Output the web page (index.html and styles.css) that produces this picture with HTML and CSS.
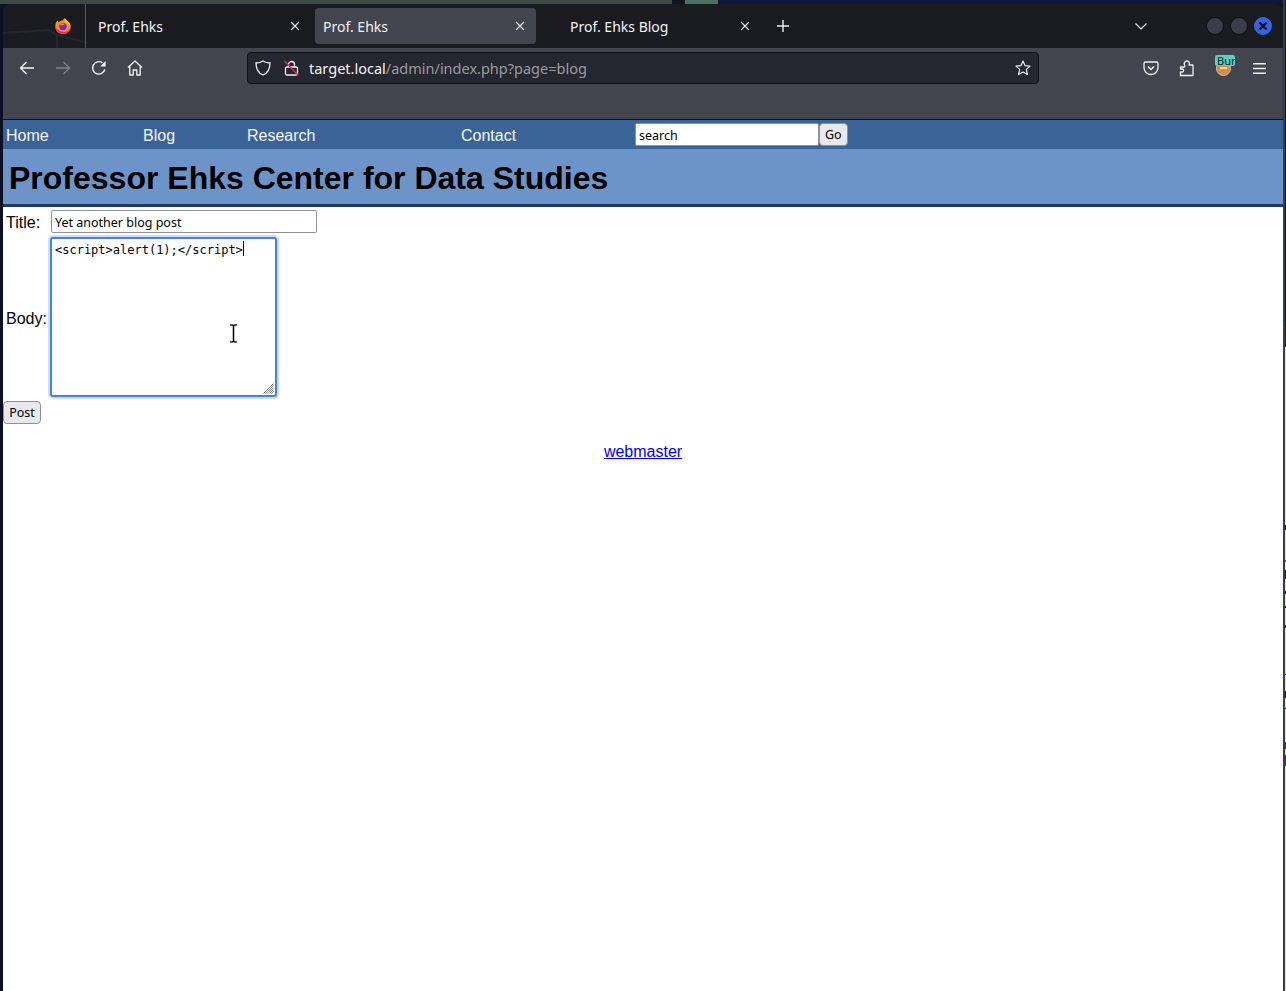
FILE: index.html
```html
<!DOCTYPE html>
<html lang="en">
<head>
<meta charset="utf-8">
<title>Prof. Ehks</title>
<link rel="stylesheet" href="styles.css">
</head>
<body>
<div class="wallpaper"><i class="wp a"></i><i class="wp b"></i><i class="wp c"></i><i class="wp d"></i><i class="wp e"></i></div>
<div class="window">
  <div class="tabbar">
    <svg class="tabart" width="85" height="44" viewBox="0 0 85 44"><path d="M0 29 L46 26 L54 31 L54 44 M54 31 L85 39" fill="none" stroke="#25262b" stroke-width="2"/></svg>
    <div class="logo-slot">
      <svg width="16" height="16" viewBox="0 0 16 16"><path d="M0.5 6 C1 4 2 3 3 2.6 C3 3.6 3.4 4 4 4.2 C5 2.8 6.8 2.6 8 2.6 C8.2 1.4 9 0.6 10 0 C10 1.6 11.5 2 13 3.4 C15 5 15.7 7 15.6 9 C15.4 13 12 16 8 16 C4 16 0.3 13 0.3 8.5 C0.3 7.6 0.3 6.8 0.5 6 Z" fill="#ff8a1f"/><path d="M10 0 C10 1.6 11.5 2 13 3.4 C15 5 15.7 7 15.6 9 C14.6 6.6 12.6 5 10.6 4.6 C9.6 3.4 9.4 1.4 10 0 Z" fill="#ffd02e"/><path d="M0.3 8.5 C0.3 13 4 16 8 16 C12 16 14.8 13.6 15.4 10.4 C13.4 13.4 10.4 14.2 7.6 13.8 C4.4 13.4 2 11.4 0.3 8.5 Z" fill="#ee2c62"/><circle cx="8" cy="8.6" r="3.7" fill="#6b2fd0"/><path d="M4.6 6.6 C6 5.2 8.4 5.2 9.8 6.2 L7.4 7.6 Z" fill="#ff8a1f"/></svg>
    </div>
    <div class="tab first"><span class="tab-title">Prof. Ehks</span><svg class="x" width="10" height="10" viewBox="0 0 10 10"><path d="M1 1 L9 9 M9 1 L1 9" stroke="#e6e6e8" stroke-width="1.1"/></svg></div>
    <div class="tab active"><span class="tab-title">Prof. Ehks</span><svg class="x" width="10" height="10" viewBox="0 0 10 10"><path d="M1 1 L9 9 M9 1 L1 9" stroke="#e6e6e8" stroke-width="1.1"/></svg></div>
    <div class="tab third"><span class="tab-title">Prof. Ehks Blog</span><svg class="x" width="10" height="10" viewBox="0 0 10 10"><path d="M1 1 L9 9 M9 1 L1 9" stroke="#e6e6e8" stroke-width="1.1"/></svg></div>
    <svg class="plus" width="12" height="12" viewBox="0 0 12 12"><path d="M6 0 V12 M0 6 H12" stroke="#f0f0f2" stroke-width="1.4"/></svg>
    <svg class="chev" width="12" height="7" viewBox="0 0 12 7"><path d="M0.5 0.5 L6 6 L11.5 0.5" fill="none" stroke="#e6e6e8" stroke-width="1.2"/></svg>
    <div class="winbtns"><span class="wb"></span><span class="wb"></span><span class="wb close"><svg width="10" height="10" viewBox="0 0 10 10"><path d="M1.5 1.5 L8.5 8.5 M8.5 1.5 L1.5 8.5" stroke="#07122e" stroke-width="2.4"/></svg></span></div>
  </div>
  <div class="toolbar">
    <div class="navrow">
      <div class="navbtns">
        <svg width="16" height="16" viewBox="0 0 16 16"><path d="M15 8 H1.5 M7.5 2 L1.5 8 L7.5 14" fill="none" stroke="#f2f2f4" stroke-width="1.3"/></svg>
        <svg width="16" height="16" viewBox="0 0 16 16"><path d="M1 8 H14.5 M8.5 2 L14.5 8 L8.5 14" fill="none" stroke="#7f8187" stroke-width="1.3"/></svg>
        <svg width="16" height="16" viewBox="0 0 16 16"><path d="M13.8 9.5 A6.2 6.2 0 1 1 11.5 2.9" fill="none" stroke="#f2f2f4" stroke-width="1.4"/><path d="M14.6 1 V6.4 H9.2 Z" fill="#f2f2f4"/></svg>
        <svg width="16" height="16" viewBox="0 0 16 16"><path d="M1 7.5 L8 1 L15 7.5 M2.8 6.5 V15 H6.2 V10 H9.8 V15 H13.2 V6.5" fill="none" stroke="#f2f2f4" stroke-width="1.3" stroke-linejoin="round"/></svg>
      </div>
      <div class="urlbar">
        <svg class="shield" width="16" height="16" viewBox="0 0 16 16"><path d="M8 1 C10 2.4 12.6 3 15 3 C15 9 13 13 8 15 C3 13 1 9 1 3 C3.4 3 6 2.4 8 1 Z" fill="none" stroke="#f0f0f2" stroke-width="1.3"/></svg>
        <svg class="lock" width="15" height="16" viewBox="0 0 15 16"><rect x="1.5" y="7" width="12" height="8" rx="1.5" fill="none" stroke="#f0f0f2" stroke-width="1.3"/><path d="M4.5 7 V4.5 A3 3 0 0 1 10.5 4.5 V7" fill="none" stroke="#f0f0f2" stroke-width="1.3"/><path d="M0.5 1 L14 15" stroke="#e22850" stroke-width="1.4"/></svg>
        <span class="url"><span class="host">target.local</span><span class="path">/admin/index.php?page=blog</span></span>
        <svg class="star" width="16" height="16" viewBox="0 0 16 16"><path d="M8 1 L10 5.6 L15 6.1 L11.3 9.4 L12.4 14.5 L8 11.9 L3.6 14.5 L4.7 9.4 L1 6.1 L6 5.6 Z" fill="none" stroke="#f0f0f2" stroke-width="1.2" stroke-linejoin="round"/></svg>
      </div>
      <div class="extras">
        <svg width="16" height="16" viewBox="0 0 16 16"><path d="M2.5 2 H13.5 A1.5 1.5 0 0 1 15 3.5 V7.5 A7 7 0 0 1 1 7.5 V3.5 A1.5 1.5 0 0 1 2.5 2 Z" fill="none" stroke="#f0f0f2" stroke-width="1.3"/><path d="M5 6.5 L8 9.5 L11 6.5" fill="none" stroke="#f0f0f2" stroke-width="1.5"/></svg>
        <svg width="16" height="17" viewBox="0 0 16 17"><path d="M1.5 7 H5 C6 7 6 5.5 5.5 5 C4.5 3.5 6 1 8 1 C10 1 11 3 10 5 H14 V15.5 H1.5 V12 H3.5 C5 12 5 9 3.5 9 H1.5 Z" fill="none" stroke="#f0f0f2" stroke-width="1.3" stroke-linejoin="round"/></svg>
        <div class="burp"><span class="burp-face"><i class="burp-inner"></i></span><span class="burp-tag">Bur</span></div>
        <svg class="menu" width="13" height="11" viewBox="0 0 13 11"><path d="M0 0.75 H13 M0 5.5 H13 M0 10.25 H13" stroke="#f0f0f2" stroke-width="1.3"/></svg>
      </div>
    </div>
  </div>
  <div class="page">
    <nav class="sitenav">
      <a class="n-home">Home</a><a class="n-blog">Blog</a><a class="n-research">Research</a><a class="n-contact">Contact</a>
      <form class="searchform"><input class="search" type="text" value="search"><button class="btn" type="button">Go</button></form>
    </nav>
    <header class="banner"><h1>Professor Ehks Center for Data Studies</h1></header>
    <form class="postform">
      <div class="field title-field"><label>Title:</label><input class="title" type="text" value="Yet another blog post"></div>
      <div class="field body-field"><label class="body-label">Body:</label>
        <div class="ta-wrap">
          <textarea class="body">&lt;script&gt;alert(1);&lt;/script&gt;</textarea>
          <span class="caret"></span>
          <svg class="grip" width="11" height="11" viewBox="0 0 11 11"><path d="M0.5 10.5 L10.5 0.5 M2.5 10.5 L10.5 2.5 M4.5 10.5 L10.5 4.5 M6.5 10.5 L10.5 6.5 M8.5 10.5 L10.5 8.5" stroke="#7c7c7c" stroke-width="0.9"/></svg>
          <svg class="ibeam" width="9" height="19" viewBox="0 0 9 19"><path d="M1 1 H3.5 L4.5 2 L5.5 1 H8 M4.5 2 V17 M1 18 H3.5 L4.5 17 L5.5 18 H8" fill="none" stroke="#bbb" stroke-width="2.6"/><path d="M1 1 H3.5 L4.5 2 L5.5 1 H8 M4.5 2 V17 M1 18 H3.5 L4.5 17 L5.5 18 H8" fill="none" stroke="#000" stroke-width="1.1"/></svg>
        </div>
      </div>
      <button class="btn post" type="button">Post</button>
    </form>
    <p class="foot"><a href="#">webmaster</a></p>
  </div>
</div>
<div class="edge"><i class="sp s1"></i><i class="sp s2"></i><i class="sp s3"></i><i class="sp s4"></i><i class="sp s5"></i><i class="sp s6"></i><i class="sp s7"></i><i class="sp s8"></i><i class="sp s9"></i><i class="sp s10"></i><i class="sp s11"></i></div>
</body>
</html>
```
FILE: styles.css
```css
* { box-sizing: border-box; }
html, body { margin: 0; height: 991px; overflow: hidden; }
body { background: #0d1024; position: relative; font-family: "Liberation Sans", Arial, sans-serif; }

.wallpaper { display: flex; height: 4px; position: absolute; left: 0; right: 0; top: 0; }
.wp { display: block; height: 4px; }
.wp.a { width: 672px; background: #3b4a44; }
.wp.b { width: 13px; background: #10131f; }
.wp.c { width: 33px; background: #4f6e60; }
.wp.d { width: 2px; background: #10131f; }
.wp.e { flex: 1; background: #12163a; }

.window { position: absolute; left: 3px; top: 4px; width: 1280px; height: 987px; display: flex; flex-direction: column; border-radius: 7px 7px 0 0; overflow: hidden; }

.tabbar { height: 44px; background: #1a1b20; display: flex; align-items: center; position: relative; flex: none; }
.tabart { position: absolute; left: 0; top: 0; }
.logo-slot { width: 83px; height: 44px; padding: 14px 0 0 52px; border-right: 1px solid #56585e; flex: none; position: relative; }
.logo-slot svg { display: block; }
.tab { height: 36px; width: 221px; display: flex; align-items: center; justify-content: space-between; padding: 0 11px 0 8px; border-radius: 4px; flex: none; color: #f3f3f5; font: 14px/20px "Noto Sans", sans-serif; }
.tab-title { padding-top: 2px; }
.tab.first { width: 226px; padding-left: 12px; padding-right: 12px; }
.tab.active { background: #42454d; margin-left: 3px; }
.tab.third { margin-left: 4px; width: 221px; padding-left: 30px; }
.x { display: block; flex: none; }
.plus { margin-left: 16px; flex: none; }
.chev { margin-left: 346px; flex: none; }
.winbtns { margin-left: auto; margin-right: 11px; display: flex; gap: 6px; align-items: center; }
.wb { width: 18px; height: 18px; border-radius: 50%; background: #3b3e48; border: 1px solid #0e0f12; display: flex; align-items: center; justify-content: center; }
.wb.close { background: #3464e0; border-color: #3464e0; }

.toolbar { height: 72px; background: #42454d; border-bottom: 1px solid #111; flex: none; }
.navrow { display: flex; align-items: center; height: 40px; }
.navbtns { display: flex; gap: 20px; padding-left: 16px; width: 244px; flex: none; }
.navbtns svg, .extras svg { display: block; flex: none; }
.urlbar { width: 792px; height: 32px; background: #252730; border: 1px solid #0f1013; border-radius: 4px; display: flex; align-items: center; padding-left: 7px; padding-right: 7px; color: #f5f5f7; font: 14.5px/20px "Noto Sans", sans-serif; flex: none; }
.shield { margin-right: 13px; flex: none; }
.lock { margin-right: 10px; flex: none; }
.host { color: #f5f5f7; }
.path { color: #9a9ba1; }
.star { margin-left: auto; }
.extras { display: flex; align-items: center; gap: 20px; padding-left: 104px; }
.burp { width: 20px; height: 24px; position: relative; flex: none; }
.burp-face { position: absolute; left: 1px; top: 5px; width: 15px; height: 15px; border-radius: 50%; background: #d98c45; border: 1px solid #c9c4b8; }
.burp-inner { position: absolute; left: 3px; top: 5px; width: 7px; height: 2px; background: #f6d9a8; display: block; }
.burp-tag { position: absolute; left: 0; top: -1px; width: 20px; height: 11px; background: #5ad2c2; border-radius: 2px; padding-left: 2px; color: #06201c; font: 11px/11px "Noto Sans", sans-serif; }
.menu { margin-left: -2px; }

.page { flex: 1; background: #fff; }
.sitenav { height: 29px; background: #3a6398; display: flex; align-items: center; position: relative; font-size: 16px; color: #fff; }
.sitenav a { display: block; flex: none; color: #f5f8fc; padding-top: 2px; }
.n-home { width: 140px; padding-left: 3px; }
.n-blog { width: 104px; }
.n-research { width: 214px; }
.n-contact { width: 174px; }
.searchform { display: flex; flex: none; }
.search { width: 184px; height: 23px; border: 1px solid #8f8f9d; border-radius: 2px; padding: 1px 3px 0; font: 12.5px "Noto Sans", sans-serif; color: #000; background: #fff; }
.btn { height: 23px; padding: 0 5px; border: 1px solid #8f8f9d; border-radius: 4px; background: #e9e9ed; font: 12.5px "Noto Sans", sans-serif; color: #000; }
.banner { height: 58px; background: #6c94c8; border-bottom: 3px solid #1b3a6b; padding: 9px 0 0 6px; }
.banner h1 { margin: 0; font-size: 32px; line-height: 41px; font-weight: 700; color: #000; white-space: nowrap; }

.postform { display: block; }
.field { display: flex; align-items: center; font-size: 16px; color: #000; }
.field label { width: 47px; padding: 2px 0 0 3px; flex: none; }
.field .body-label { padding-top: 4px; }
.title-field { margin-top: 3px; }
.title { width: 266px; height: 23px; margin-left: 1px; border: 1px solid #8f8f9d; border-radius: 2px; padding: 1px 3px 0; font: 12.5px "Noto Sans", sans-serif; color: #000; background: #fff; }
.body-field { margin-top: 4px; }
.ta-wrap { position: relative; height: 160px; width: 227px; }
.body { display: block; width: 227px; height: 160px; border: 2px solid #4a80dc; border-radius: 3px; box-shadow: 0 0 0 2px #c9def9; padding: 3px 3px; outline: none; resize: none; font: 12px/17px "DejaVu Sans Mono", monospace; color: #000; background: #fff; }
.caret { position: absolute; left: 193px; top: 4px; width: 1px; height: 15px; background: #000; }
.grip { position: absolute; left: 213px; top: 146px; }
.ibeam { position: absolute; left: 179px; top: 87px; }
.post { display: block; margin: 4px 0 0 0; width: 38px; }
.foot { margin: 19px 0 0; text-align: center; font-size: 16px; }
.foot a { color: #0000ee; text-decoration: underline; }

.edge { position: absolute; right: 0; top: 0; bottom: 0; width: 3px; border-left: 2px solid #3a3c44; background: linear-gradient(#12163a 0, #12163a 326px, #26262c 326px, #26262c 347px, #e6e6e6 347px); }
.sp { position: absolute; left: 0; width: 1px; display: block; }
.s1 { top: 525px; height: 5px; background: #111; }
.s2 { top: 560px; height: 2px; background: #a0562a; }
.s3 { top: 570px; height: 9px; background: #222; }
.s4 { top: 591px; height: 3px; background: #14145a; }
.s5 { top: 606px; height: 2px; background: #14145a; }
.s6 { top: 625px; height: 3px; background: #14145a; }
.s7 { top: 674px; height: 1px; background: #14145a; }
.s8 { top: 691px; height: 7px; background: #14145a; }
.s9 { top: 708px; height: 1px; background: #14145a; }
.s10 { top: 742px; height: 7px; background: #6a1a8a; }
.s11 { top: 755px; height: 11px; background: #6a1a8a; }
```
